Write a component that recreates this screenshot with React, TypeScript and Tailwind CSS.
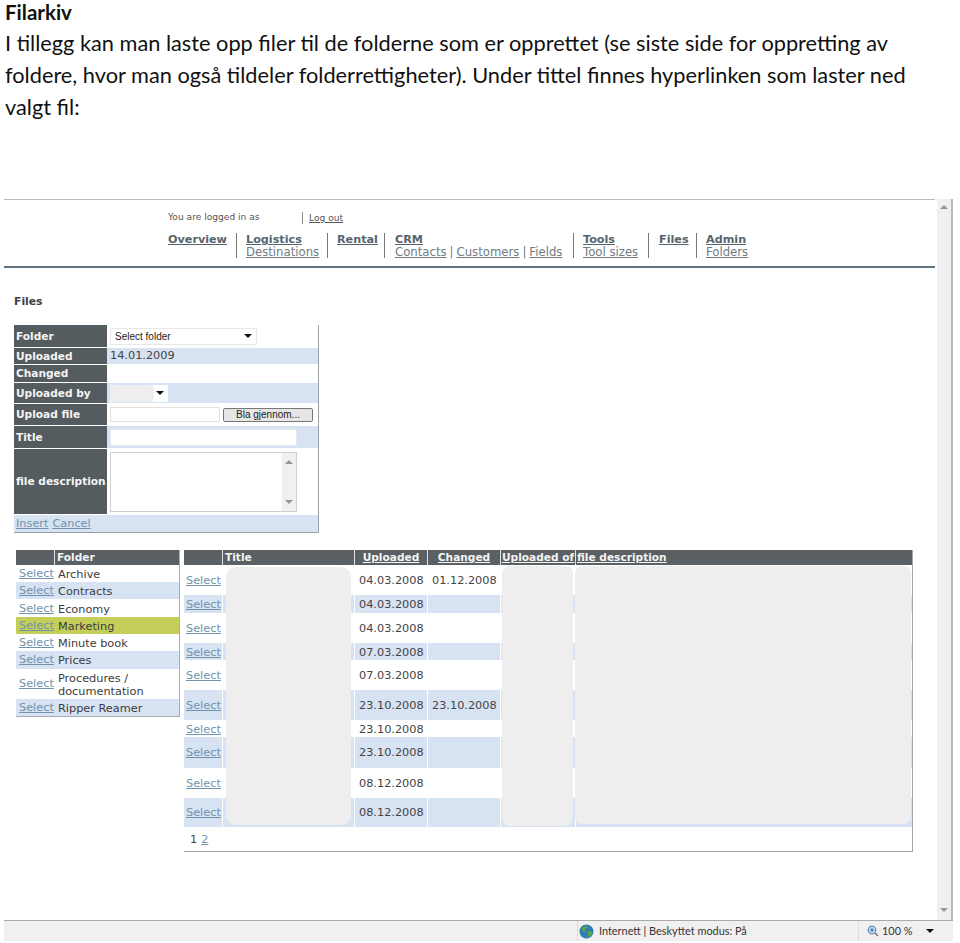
import React from 'react';

const verdana = "font-['DejaVu_Sans',sans-serif]";

const Caret = ({ className = '' }: { className?: string }) => (
    <svg width="8" height="4" viewBox="0 0 8 4" className={className}>
        <path d="M0 0h8L4 4z" fill="#111" />
    </svg>
);

const navGroups = [
    { title: 'Overview', width: 'w-[69px]', margin: 'mr-[9px]', subs: [] as string[] },
    { title: 'Logistics', width: 'w-[82px]', margin: 'mr-[9px]', subs: ['Destinations'] },
    { title: 'Rental', width: 'w-[48px]', margin: 'mr-[10px]', subs: [] as string[] },
    { title: 'CRM', width: 'w-[179px]', margin: 'mr-[9px]', subs: ['Contacts', 'Customers', 'Fields'] },
    { title: 'Tools', width: 'w-[66px]', margin: 'mr-[10px]', subs: ['Tool sizes'] },
    { title: 'Files', width: 'w-[38px]', margin: 'mr-[9px]', subs: [] as string[] },
    { title: 'Admin', width: 'w-[50px]', margin: '', subs: ['Folders'] },
];

const formLabel = `flex items-center pl-[2px] pt-[1px] bg-[#555c5f] text-[#f4f4f4] font-bold text-[10.6px] w-[93px] shrink-0 whitespace-nowrap`;

const folders = [
    { name: 'Archive', h: 'h-[17px]', bg: 'bg-white' },
    { name: 'Contracts', h: 'h-[17px] mb-[1px]', bg: 'bg-[#d7e2f3]' },
    { name: 'Economy', h: 'h-[17px]', bg: 'bg-white' },
    { name: 'Marketing', h: 'h-[17px]', bg: 'bg-[#c3cf58]' },
    { name: 'Minute book', h: 'h-[17px]', bg: 'bg-white' },
    { name: 'Prices', h: 'h-[18px]', bg: 'bg-[#d7e2f3]' },
    { name: 'Procedures / documentation', h: 'h-[30px]', bg: 'bg-white' },
    { name: 'Ripper Reamer', h: 'h-[17px]', bg: 'bg-[#d7e2f3]' },
];

const files = [
    { h: 'h-[29px]', up: '04.03.2008', ch: '01.12.2008', bg: 'bg-white' },
    { h: 'h-[18px]', up: '04.03.2008', ch: '', bg: 'bg-[#d7e2f3]' },
    { h: 'h-[30px]', up: '04.03.2008', ch: '', bg: 'bg-white' },
    { h: 'h-[17px]', up: '07.03.2008', ch: '', bg: 'bg-[#d7e2f3]' },
    { h: 'h-[30px]', up: '07.03.2008', ch: '', bg: 'bg-white' },
    { h: 'h-[30px]', up: '23.10.2008', ch: '23.10.2008', bg: 'bg-[#d7e2f3]' },
    { h: 'h-[17px]', up: '23.10.2008', ch: '', bg: 'bg-white' },
    { h: 'h-[31px]', up: '23.10.2008', ch: '', bg: 'bg-[#d7e2f3]' },
    { h: 'h-[30px]', up: '08.12.2008', ch: '', bg: 'bg-white' },
    { h: 'h-[29px]', up: '08.12.2008', ch: '', bg: 'bg-[#d7e2f3]' },
];

const SelectLink = () => <a className="text-[#6f93ad] underline">Select</a>;

function FormPanel() {
    return (
        <div className="w-[305px] border-r border-b border-[#9aa1a6] flex flex-col gap-[1px] text-[#444] text-[11.3px]">
            <div className="flex h-[22px]">
                <div className={formLabel}>Folder</div>
                <div className="flex-1 pl-[3px] flex items-center">
                    <div className="w-[147px] h-[17px] flex items-center justify-between pl-[4px] pr-[4px] border border-[#e8e8e8] text-[10px] text-[#222] font-['Liberation_Sans',sans-serif]">
                        Select folder
                        <Caret />
                    </div>
                </div>
            </div>
            <div className="flex h-[16px]">
                <div className={formLabel}>Uploaded</div>
                <div className="flex-1 bg-[#d7e2f3] pl-[3px] pt-[1px] flex items-center">14.01.2009</div>
            </div>
            <div className="flex h-[17px]">
                <div className={formLabel}>Changed</div>
                <div className="flex-1" />
            </div>
            <div className="flex h-[20px]">
                <div className={formLabel}>Uploaded by</div>
                <div className="flex-1 bg-[#d7e2f3] pl-[3px] flex items-center">
                    <div className="w-[58px] h-[17px] bg-white flex items-center justify-between pr-[4px]">
                        <div className="w-[44px] h-full bg-[#eeeeee] rounded-[4px]" />
                        <Caret />
                    </div>
                </div>
            </div>
            <div className="flex h-[21px]">
                <div className={formLabel}>Upload file</div>
                <div className="flex-1 pl-[3px] flex items-center gap-[3px]">
                    <div className="w-[110px] h-[15px] border border-[#e6e0de]" />
                    <div className="w-[90px] h-[14px] rounded-[2px] border border-[#777] bg-[#e6e6e6] flex items-center justify-center text-[10px] text-[#222] font-['Liberation_Sans',sans-serif]">
                        Bla gjennom...
                    </div>
                </div>
            </div>
            <div className="flex h-[22px]">
                <div className={formLabel}>Title</div>
                <div className="flex-1 bg-[#d7e2f3] pl-[3px] flex items-center">
                    <div className="w-[187px] h-[17px] bg-white border border-[#e5e9f0]" />
                </div>
            </div>
            <div className="flex h-[65px]">
                <div className={formLabel}>file description</div>
                <div className="flex-1 pl-[3px] flex items-center">
                    <div className="w-[187px] h-[60px] border border-[#cfcfcf] flex justify-end">
                        <div className="w-[14px] h-full bg-[#f0f0f0] flex flex-col items-center justify-between py-[7px]">
                            <Caret className="rotate-180 opacity-40" />
                            <Caret className="opacity-40" />
                        </div>
                    </div>
                </div>
            </div>
            <div className="h-[17px] bg-[#d7e2f3] pl-[2px] pt-[1px] flex items-center gap-[4px] text-[#6f93ad] underline">
                <a>Insert</a>
                <a>Cancel</a>
            </div>
        </div>
    );
}

function FolderTable() {
    return (
        <div className="w-[164px] shrink-0 border-r border-b border-[#a8adb0] text-[#444] text-[11.3px] self-start">
            <div className="flex h-[15px] bg-[#5a6063] text-[#f4f4f4] font-bold text-[10.6px] leading-[15px]">
                <div className="w-[39px] border-r border-[#dfe3e6]" />
                <div className="pl-[2px]">Folder</div>
            </div>
            {folders.map((f) => (
                <div key={f.name} className={`flex items-center pt-[1px] ${f.h} ${f.bg}`}>
                    <div className="w-[39px] pl-[3px] shrink-0">
                        <SelectLink />
                    </div>
                    <div className="pl-[3px] leading-[13px] text-[#3c3c3c]">{f.name}</div>
                </div>
            ))}
        </div>
    );
}

const fileCols = 'grid grid-cols-[39px_132px_73px_73px_75px_1fr]';
const fileCell = 'flex items-center pt-[2px] border-r border-white';

function FilesTable() {
    return (
        <div className="relative w-[729px] h-[302px] border-r border-b border-[#a2a7aa] text-[#444] text-[11.3px]">
            <div className={`${fileCols} h-[15px] bg-[#5a6063] text-[#f4f4f4] font-bold text-[10.6px] leading-[15px] mb-[1px]`}>
                <div className="border-r border-[#dfe3e6]" />
                <div className="pl-[2px] border-r border-[#dfe3e6]">Title</div>
                <div className="text-center underline border-r border-[#dfe3e6]">Uploaded</div>
                <div className="text-center underline border-r border-[#dfe3e6]">Changed</div>
                <div className="pl-[1px] underline whitespace-nowrap border-r border-[#dfe3e6]">Uploaded of</div>
                <div className="pl-[1px] underline">file description</div>
            </div>
            {files.map((f, i) => (
                <div key={i} className={`${fileCols} ${f.h} ${f.bg}`}>
                    <div className={`${fileCell} pl-[2px]`}>
                        <SelectLink />
                    </div>
                    <div className={fileCell} />
                    <div className={`${fileCell} pl-[4px]`}>{f.up}</div>
                    <div className={`${fileCell} pl-[4px]`}>{f.ch}</div>
                    <div className={fileCell} />
                    <div />
                </div>
            ))}
            <div className="h-[24px] flex items-center gap-[4px] pl-[6px] pt-[2px]">
                <span>1</span>
                <a className="text-[#6f93ad] underline">2</a>
            </div>
            {/* gråfelt over sensurerte kolonner */}
            <div className="absolute left-[42px] top-[17px] w-[125px] h-[258px] bg-[#eeeeee] rounded-[10px]" />
            <div className="absolute left-[318px] top-[16px] w-[71px] h-[260px] bg-[#eeeeee] rounded-[8px]" />
            <div className="absolute left-[391px] top-[16px] w-[336px] h-[258px] bg-[#eeeeee] rounded-[8px]" />
        </div>
    );
}

function Scrollbar() {
    return (
        <div className="w-[16px] shrink-0 bg-[#f0f0f0] border-r-2 border-[#b4bac0] flex flex-col items-center justify-between pt-[6px] pb-[8px]">
            <Caret className="rotate-180 opacity-40" />
            <Caret className="opacity-40" />
        </div>
    );
}

function StatusBar() {
    return (
        <div className="h-[21px] shrink-0 border-t border-[#a9a9a9] bg-[#f0f0f0] flex items-center text-[10.9px] text-[#333] font-['Lato',sans-serif] pl-[573px]">
            <div className="w-[281px] h-full border-l border-[#dcdcdc] flex items-center">
                <svg width="15" height="15" viewBox="0 0 16 16" className="shrink-0 ml-[1px]">
                    <circle cx="8" cy="8" r="7.5" fill="#2f7fb5" />
                    <path d="M3 4.5c2-2 4-2.5 6-2 .5 1.5-1 2.5-2.5 3-.5 1.5 1 2 .5 3.5-1.5.5-3.5-1-4-4.5z" fill="#5aa350" />
                    <path d="M9.5 8c2-.5 4 0 5 1-.5 2.5-2 4.5-4 5-1-1.5-2-4-1-6z" fill="#5aa350" />
                </svg>
                <span className="ml-[5px] whitespace-nowrap">Internett | Beskyttet modus: På</span>
            </div>
            <div className="h-full border-l border-[#dcdcdc] pl-[8px] flex items-center">
                <svg width="12" height="12" viewBox="0 0 12 12" className="shrink-0">
                    <circle cx="5" cy="5" r="3.8" fill="#cfe0f2" stroke="#5b8bb8" strokeWidth="1.2" />
                    <path d="M3 5h4M5 3v4" stroke="#2f6ea6" strokeWidth="1" />
                    <path d="M8 8l3 3" stroke="#777" strokeWidth="1.5" />
                </svg>
                <span className="ml-[3px] whitespace-nowrap">100 %</span>
                <Caret className="ml-[14px]" />
            </div>
        </div>
    );
}

export default function App() {
    return (
        <div className="w-[960px] h-[943px] bg-white flex flex-col overflow-hidden">
            <div className="h-[199px] shrink-0 pl-[5px] text-[#111] text-[21.75px] leading-[32px] font-['Lato',sans-serif]">
                <h1 className="font-bold text-[20.5px] leading-[25px] h-[27px]">Filarkiv</h1>
                <p className="w-[910px]">
                    I tillegg kan man laste opp filer til de folderne som er opprettet (se siste side for oppretting av foldere, hvor man også tildeler folderrettigheter). Under tittel finnes hyperlinken som laster ned valgt fil:
                </p>
            </div>

            <div className={`ml-[4px] w-[949px] h-[742px] flex flex-col ${verdana}`}>
                <div className="flex-1 flex min-h-0">
                    <div className="flex-1 min-w-0 flex flex-col">
                        <div className="pl-[164px] pt-[11px] h-[69px] border-t border-b-2 border-t-[#b4bdc4] border-b-[#5f7380] mr-[2px]">
                            <div className="flex items-center h-[13px] text-[9.1px] text-[#555]">
                                <span className="w-[134px]">You are logged in as</span>
                                <span className="border-l border-[#888] h-[12px] pl-[6px] text-[#555] underline leading-[12px]">Log out</span>
                            </div>
                            <div className="flex mt-[9px]">
                                {navGroups.map((g) => (
                                    <div
                                        key={g.title}
                                        className={`${g.width} ${g.margin} h-[25px] leading-[12px] pt-[1px] ${g.title !== 'Admin' ? 'border-r border-[#777]' : ''}`}
                                    >
                                        <div className="text-[11.2px] font-bold text-[#56646c] underline">{g.title}</div>
                                        <div className="text-[11.7px] text-[#6f7c84] whitespace-nowrap">
                                            {g.subs.map((s, i) => (
                                                <React.Fragment key={s}>
                                                    {i > 0 && <span className="mx-[3px]">|</span>}
                                                    <a className="underline">{s}</a>
                                                </React.Fragment>
                                            ))}
                                        </div>
                                    </div>
                                ))}
                            </div>
                        </div>

                        <div className="pl-[10px] pt-[27px] text-[10.8px] font-bold text-[#3c4246] leading-[14px]">Files</div>
                        <div className="pl-[10px] pt-[16px]">
                            <FormPanel />
                        </div>
                        <div className="flex gap-[4px] pl-[12px] pt-[17px]">
                            <FolderTable />
                            <FilesTable />
                        </div>
                    </div>
                    <Scrollbar />
                </div>
                <StatusBar />
            </div>
        </div>
    );
}
